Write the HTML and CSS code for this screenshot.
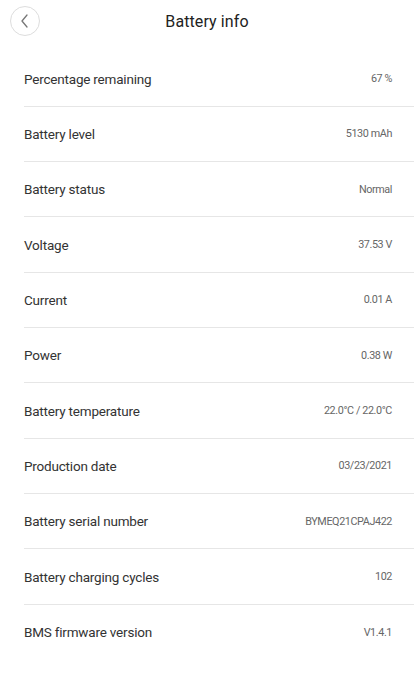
FILE: index.html
```html
<!DOCTYPE html>
<html lang="en">
<head>
  <meta charset="UTF-8">
  <title>Battery info</title>
  <link rel="stylesheet" href="styles.css">
</head>
<body>

  <!-- HEADER -->
  <header class="topbar">
    <button class="back-btn" aria-label="Back">
      <svg width="12" height="14" viewBox="0 0 12 14"><path d="M8 1 L3 7 L8 13" fill="none" stroke="#777" stroke-width="1.3" stroke-linecap="round" stroke-linejoin="round"/></svg>
    </button>
    <h1>Battery info</h1>
  </header>

  <!-- LIST -->
  <ul class="info-list">
    <li><span class="label">Percentage remaining</span><span class="value">67 %</span></li>
    <li><span class="label">Battery level</span><span class="value">5130 mAh</span></li>
    <li><span class="label">Battery status</span><span class="value">Normal</span></li>
    <li><span class="label">Voltage</span><span class="value">37.53 V</span></li>
    <li><span class="label">Current</span><span class="value">0.01 A</span></li>
    <li><span class="label">Power</span><span class="value">0.38 W</span></li>
    <li><span class="label">Battery temperature</span><span class="value">22.0°C / 22.0°C</span></li>
    <li><span class="label">Production date</span><span class="value">03/23/2021</span></li>
    <li><span class="label">Battery serial number</span><span class="value">BYMEQ21CPAJ422</span></li>
    <li><span class="label">Battery charging cycles</span><span class="value">102</span></li>
    <li><span class="label">BMS firmware version</span><span class="value">V1.4.1</span></li>
  </ul>

</body>
</html>
```

FILE: styles.css
```css
/* ------------- RESET & BASE ------------- */
* { margin: 0; padding: 0; box-sizing: border-box; }
body {
  font-family: 'Roboto', 'Liberation Sans', sans-serif;
  background: #fff;
  color: #333;
}

/* ------------- HEADER ------------- */
.topbar {
  position: relative;
  height: 51.5px;
  display: flex; align-items: center; justify-content: center;
  padding-bottom: 8px;
}
.back-btn {
  position: absolute; left: 10px; top: 6px;
  width: 30px; height: 30px;
  border: 1px solid #ddd; border-radius: 50%;
  background: #fff;
  display: flex; align-items: center; justify-content: center;
}
.topbar h1 {
  font-size: 16px; font-weight: 400; color: #222;
  letter-spacing: 0.1px;
}

/* ------------- LIST ------------- */
.info-list { list-style: none; padding-left: 24px; }
.info-list li {
  height: 55.33px;
  display: flex; align-items: center; justify-content: space-between;
  padding-right: 22px;
  border-bottom: 1px solid #e6e6e6;
}
.info-list li:last-child { border-bottom: none; }
.label { font-size: 13.5px; color: #333; letter-spacing: -0.2px; }
.value { font-size: 10.8px; color: #666; letter-spacing: -0.4px; }
```
